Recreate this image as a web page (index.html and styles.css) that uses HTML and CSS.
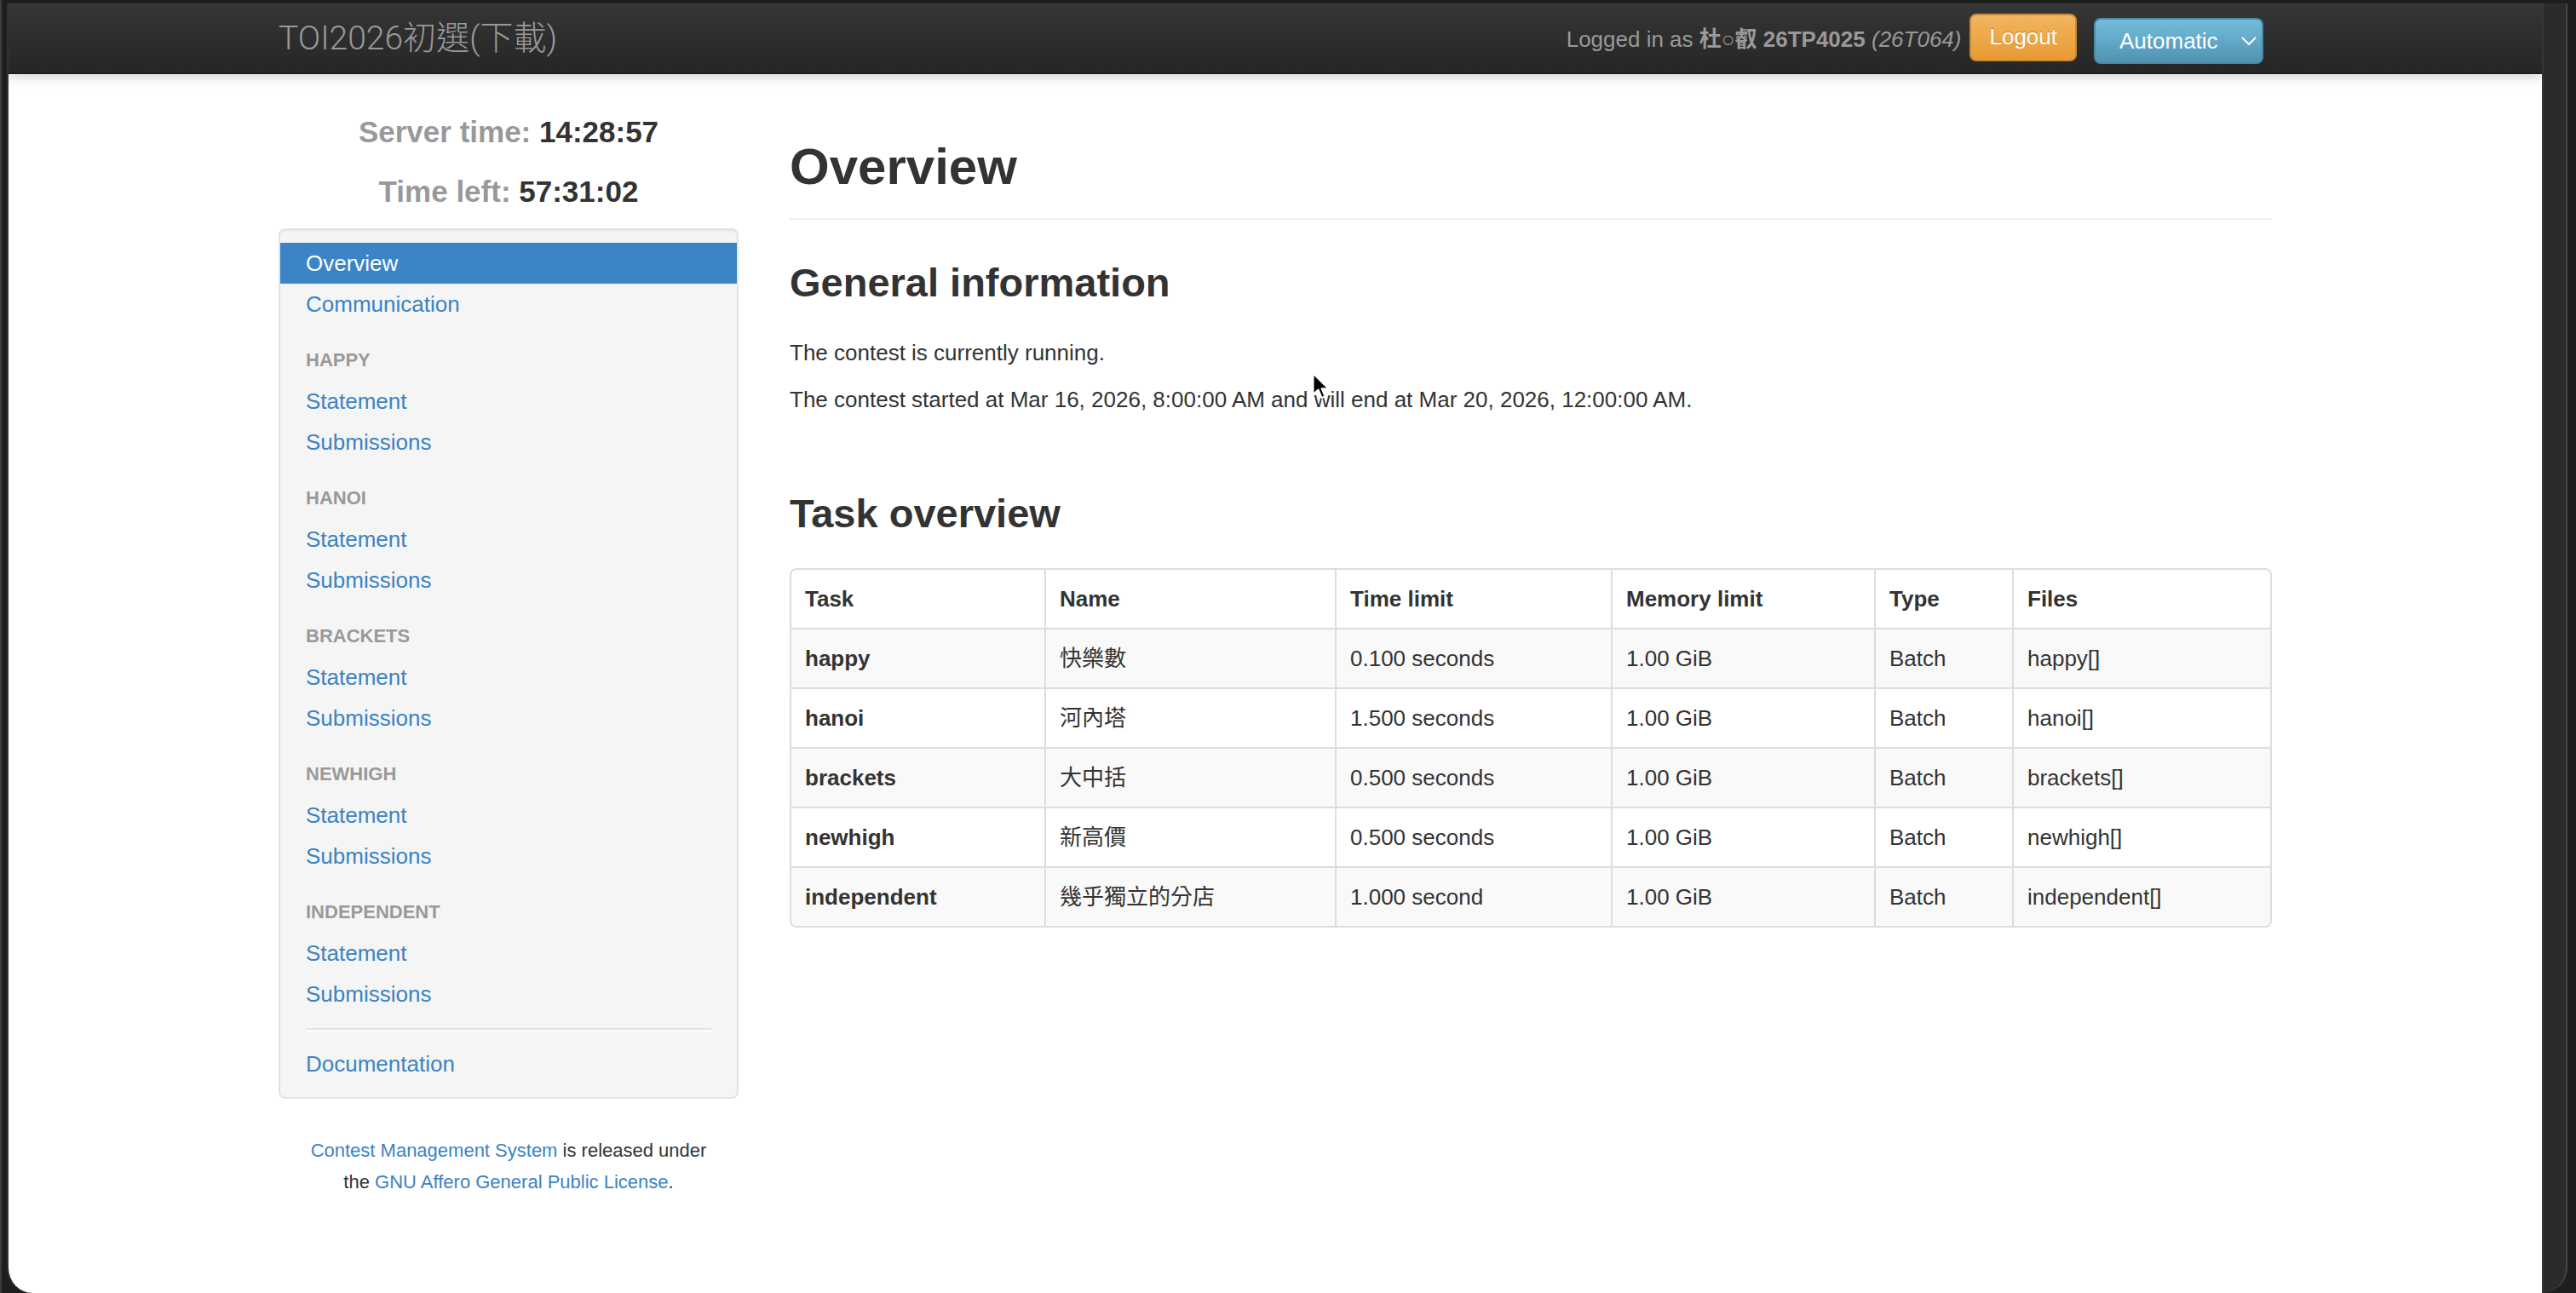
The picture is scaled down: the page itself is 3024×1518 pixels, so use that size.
FILE: index.html
```html
<!DOCTYPE html>
<html lang="en">
<head>
  <meta charset="UTF-8">
  <meta name="viewport" content="width=device-width, initial-scale=1.0">
  <title>TOI2026初選(下載)</title>
  <link rel="stylesheet" href="styles.css">
</head>
<body>
  <div class="screen">
    <div class="page">
      <div class="navbar">
        <div class="container nav-inner">
          <a class="brand" href="#">TOI2026初選(下載)</a>
          <div class="nav-right">
            <p class="navbar-text">Logged in as <strong>杜○叡 26TP4025</strong> <em>(26T064)</em></p>
            <button class="btn-logout" type="button">Logout</button>
            <div class="theme-select">
              Automatic
              <svg class="chevron" width="18" height="10" viewBox="0 0 18 10"><path d="M1 1 L9 9 L17 1" fill="none" stroke="#fff" stroke-width="2"/></svg>
            </div>
          </div>
        </div>
      </div>

      <div class="container main-row">
        <div class="sidebar">
          <div class="clock">
            <p><span class="label">Server time:</span> 14:28:57</p>
            <p><span class="label">Time left:</span> 57:31:02</p>
          </div>

          <div class="well">
            <ul class="nav-list">
              <li class="active"><a href="#">Overview</a></li>
              <li><a href="#">Communication</a></li>
              <li class="nav-header">happy</li>
              <li><a href="#">Statement</a></li>
              <li><a href="#">Submissions</a></li>
              <li class="nav-header">hanoi</li>
              <li><a href="#">Statement</a></li>
              <li><a href="#">Submissions</a></li>
              <li class="nav-header">brackets</li>
              <li><a href="#">Statement</a></li>
              <li><a href="#">Submissions</a></li>
              <li class="nav-header">newhigh</li>
              <li><a href="#">Statement</a></li>
              <li><a href="#">Submissions</a></li>
              <li class="nav-header">independent</li>
              <li><a href="#">Statement</a></li>
              <li><a href="#">Submissions</a></li>
              <li class="divider"></li>
              <li><a href="#">Documentation</a></li>
            </ul>
          </div>

          <div class="footer">
            <p><a href="#">Contest Management System</a> is released under</p>
            <p>the <a href="#">GNU Affero General Public License</a>.</p>
          </div>
        </div>

        <div class="content">
          <h1 class="page-header">Overview</h1>

          <div class="section">
            <h3>General information</h3>
            <p>The contest is currently running.</p>
            <p>The contest started at Mar 16, 2026, 8:00:00 AM and will end at Mar 20, 2026, 12:00:00 AM.</p>
          </div>

          <div class="section tasks">
            <h3>Task overview</h3>
            <table class="task-table">
              <thead>
                <tr>
                  <th class="c-task">Task</th>
                  <th class="c-name">Name</th>
                  <th class="c-time">Time limit</th>
                  <th class="c-mem">Memory limit</th>
                  <th class="c-type">Type</th>
                  <th>Files</th>
                </tr>
              </thead>
              <tbody>
                <tr><td>happy</td><td>快樂數</td><td>0.100 seconds</td><td>1.00 GiB</td><td>Batch</td><td>happy[]</td></tr>
                <tr><td>hanoi</td><td>河內塔</td><td>1.500 seconds</td><td>1.00 GiB</td><td>Batch</td><td>hanoi[]</td></tr>
                <tr><td>brackets</td><td>大中括</td><td>0.500 seconds</td><td>1.00 GiB</td><td>Batch</td><td>brackets[]</td></tr>
                <tr><td>newhigh</td><td>新高價</td><td>0.500 seconds</td><td>1.00 GiB</td><td>Batch</td><td>newhigh[]</td></tr>
                <tr><td>independent</td><td>幾乎獨立的分店</td><td>1.000 second</td><td>1.00 GiB</td><td>Batch</td><td>independent[]</td></tr>
              </tbody>
            </table>
          </div>
        </div>
      </div>

      <!-- mouse pointer left in the shot -->
      <svg class="cursor" width="24" height="34" viewBox="0 0 24 34"><path d="M1.5 1.5 L1.5 26 L7.5 20.5 L11.5 30 L15.5 28.3 L11.5 19.2 L19.5 19.2 Z" fill="#000" stroke="#fff" stroke-width="2" stroke-linejoin="round"/></svg>
    </div>
    <div class="track"></div>
  </div>
</body>
</html>
```

FILE: styles.css
```css
* {
  box-sizing: border-box;
}

body {
  margin: 0;
  background-color: #1d1f1d;
  font-family: "Liberation Sans", "Noto Sans CJK TC", Arial, sans-serif;
  font-size: 26px;
  line-height: 36px;
  color: #333;
}

a {
  color: #3a83c4;
  text-decoration: none;
}

/* window frame */
.screen {
  display: flex;
  height: 1518px;
  padding: 4px 10px 0 6px;
  border-left: 2px solid #3b3d3b;
  overflow: hidden;
}

.page {
  flex: 1;
  position: relative;
  background-color: #fff;
  border-left: 2px solid #303230;
  border-bottom-left-radius: 30px;
  overflow: hidden;
}

.track {
  width: 30px;
  background-color: #2b2b2b;
  border-left: 2px solid #363636;
  border-right: 2px solid #474747;
  border-bottom-right-radius: 30px;
}

.container {
  width: 2340px;
  margin: 0 auto;
}

/* top bar */
.navbar {
  position: relative;
  z-index: 1;
  height: 83px;
  background: linear-gradient(#353535, #262626);
  border-top: 2px solid #3a3a3a;
  border-bottom: 2px solid #1f1f1f;
  box-shadow: 0 2px 14px rgba(0, 0, 0, 0.22);
}

.nav-inner {
  display: flex;
  align-items: center;
  height: 100%;
}

.brand {
  font-family: Roboto, "Noto Sans CJK TC", sans-serif;
  font-weight: 300;
  font-size: 39px;
  line-height: 40px;
  color: #999;
  margin-top: -2px;
}

.nav-right {
  margin-left: auto;
  margin-right: 10px;
  display: flex;
  align-items: center;
}

.navbar-text {
  margin: 0 10px 0 0;
  color: #999;
}

.navbar-text strong {
  font-weight: bold;
}

.btn-logout {
  height: 56px;
  padding: 0 21px;
  margin-top: -4px;
  font-family: "Liberation Sans", Arial, sans-serif;
  font-size: 26px;
  color: #fff;
  background: linear-gradient(#f2b55f, #e89a33);
  border: 2px solid #c98a35;
  border-radius: 8px;
  text-shadow: 0 -1px 0 rgba(0, 0, 0, 0.25);
}

.theme-select {
  position: relative;
  width: 199px;
  height: 54px;
  margin: 4px 0 0 20px;
  padding-left: 28px;
  display: flex;
  align-items: center;
  color: #fff;
  background: linear-gradient(#75bddc, #4f93b1);
  border: 2px solid #4a8aa6;
  border-radius: 8px;
}

.chevron {
  position: absolute;
  right: 6px;
  top: 20px;
}

/* layout */
.main-row {
  display: flex;
  padding-top: 48px;
}

.sidebar {
  width: 540px;
}

.content {
  width: 1740px;
  margin-left: 60px;
}

/* sidebar */
.clock p {
  margin: 0;
  text-align: center;
  font-size: 35px;
  line-height: 40px;
  font-weight: bold;
  color: #333;
}

.clock p + p {
  margin-top: 30px;
}

.clock .label {
  color: #999;
}

.well {
  margin-top: 23px;
  padding: 15px 0;
  background-color: #f5f5f5;
  border: 2px solid #e3e3e3;
  border-radius: 8px;
  box-shadow: inset 0 2px 2px rgba(0, 0, 0, 0.05);
}

.nav-list {
  list-style: none;
  margin: 0;
  padding: 0;
}

.nav-list a {
  display: block;
  padding: 6px 30px;
}

.nav-list .active a {
  background-color: #3b84c5;
  color: #fff;
}

.nav-header {
  margin-top: 18px;
  padding: 6px 30px;
  font-size: 22px;
  font-weight: bold;
  color: #999;
  text-transform: uppercase;
}

.divider {
  height: 4px;
  margin: 16px 30px 14px;
  background-color: #e3e3e3;
  border-bottom: 2px solid #fff;
}

.footer {
  margin-top: 42px;
  text-align: center;
  font-size: 22px;
  line-height: 37px;
}

.footer p {
  margin: 0;
}

/* main content */
.page-header {
  margin: 25px 0 46px;
  padding-bottom: 24px;
  border-bottom: 2px solid #eee;
  font-size: 60px;
  line-height: 72px;
}

h3 {
  margin: 0 0 36px;
  font-size: 47px;
  line-height: 56px;
}

.section p {
  margin: 0 0 19px;
}

.tasks {
  margin-top: 88px;
}

.task-table {
  width: 100%;
  table-layout: fixed;
  border-collapse: separate;
  border-spacing: 0;
  border: 2px solid #ddd;
  border-radius: 8px;
}

.task-table th,
.task-table td {
  padding: 16px;
  text-align: left;
  vertical-align: top;
  border-left: 2px solid #ddd;
  border-top: 2px solid #ddd;
}

.task-table th {
  border-top: none;
}

.task-table th:first-child,
.task-table td:first-child {
  border-left: none;
  font-weight: bold;
}

.task-table tbody tr:nth-child(odd) td {
  background-color: #f9f9f9;
}

.task-table tbody tr:last-child td:first-child {
  border-bottom-left-radius: 6px;
}

.task-table tbody tr:last-child td:last-child {
  border-bottom-right-radius: 6px;
}

.c-task { width: 297px; }
.c-name { width: 341px; }
.c-time { width: 324px; }
.c-mem { width: 309px; }
.c-type { width: 162px; }

.cursor {
  position: absolute;
  left: 1530px;
  top: 433px;
}
```
